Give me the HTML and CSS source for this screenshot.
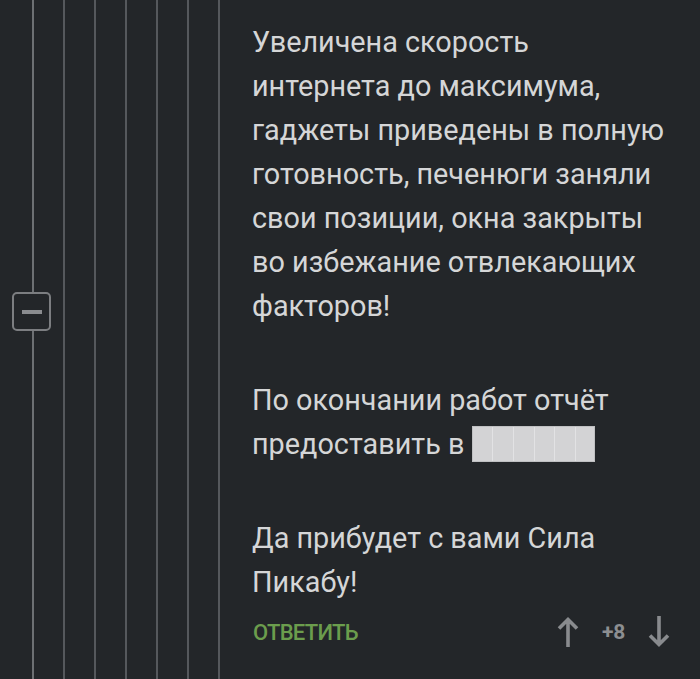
FILE: index.html
```html
<!DOCTYPE html>
<html lang="ru">
<head>
<meta charset="utf-8">
<title>Комментарий</title>
<link rel="stylesheet" href="styles.css">
</head>
<body>
<div class="comment">
  <div class="threads">
    <div class="branch branch-main">
      <button class="toggle" aria-label="Свернуть"><span class="toggle-bar"></span></button>
    </div>
    <div class="branch"></div>
    <div class="branch"></div>
    <div class="branch"></div>
    <div class="branch"></div>
    <div class="branch"></div>
    <div class="branch"></div>
  </div>
  <div class="content">
    <p class="para">Увеличена скорость<br>интернета до максимума,<br>гаджеты приведены в полную<br>готовность, печенюги заняли<br>свои позиции, окна закрыты<br>во избежание отвлекающих<br>факторов!</p>
    <p class="para">По окончании работ отчёт<br>предоставить в <span class="redacted" aria-label="скрыто"></span></p>
    <p class="para">Да прибудет с вами Сила<br>Пикабу!</p>
    <div class="actions">
      <a class="reply" href="#">ОТВЕТИТЬ</a>
      <div class="rating">
        <svg class="arrow" width="22" height="32" viewBox="0 0 22 32"><path d="M11 3.5V31M2 12.5L11 3.5L20 12.5" fill="none" stroke="currentColor" stroke-width="3.6" stroke-linejoin="miter" stroke-linecap="butt"/></svg>
        <span class="score">+8</span>
        <svg class="arrow" width="22" height="32" viewBox="0 0 22 32"><path d="M11 0V28.5M2 19.5L11 28.5L20 19.5" fill="none" stroke="currentColor" stroke-width="3.6" stroke-linejoin="miter" stroke-linecap="butt"/></svg>
      </div>
    </div>
  </div>
</div>
</body>
</html>
```

FILE: styles.css
```css
html, body {
  margin: 0;
  padding: 0;
  background: #232629;
}

body {
  width: 700px;
  height: 679px;
  overflow: hidden;
  font-family: Roboto, "Noto Sans", sans-serif;
}

.comment {
  display: flex;
  min-height: 679px;
}

.threads {
  display: flex;
  gap: 29px;
  padding-left: 32px;
  flex: none;
}

.branch {
  width: 2px;
  background: #55585c;
  position: relative;
}

.branch-main {
  background: #6d7073;
}

.toggle {
  position: absolute;
  left: -20px;
  top: 292px;
  width: 39px;
  height: 39px;
  box-sizing: border-box;
  border: 2px solid #7c7e81;
  border-radius: 5px;
  background: #232629;
  padding: 0;
  display: flex;
  align-items: center;
  justify-content: center;
  cursor: pointer;
}

.toggle-bar {
  display: block;
  width: 20px;
  height: 4px;
  background: #8a8c8f;
}

.content {
  flex: none;
  width: 418px;
  margin-left: 32px;
  padding-top: 20px;
  color: #d5d6d7;
}

.para {
  margin: 0 0 50px;
  font-size: 28.8px;
  line-height: 44px;
  white-space: nowrap;
}

.para:nth-of-type(3) {
  margin-bottom: 0;
}

.redacted {
  display: inline-block;
  width: 123px;
  height: 36px;
  box-sizing: border-box;
  vertical-align: -8px;
  background-color: #d3d3d5;
  background-image: repeating-linear-gradient(to right, transparent 0, transparent 19.5px, #e2e2e4 19.5px, #e2e2e4 20.5px);
  border: 1px solid #bfc0c2;
}

.actions {
  height: 56px;
  display: flex;
  align-items: center;
  justify-content: space-between;
}

.reply {
  color: #6b9d4d;
  font-size: 22px;
  font-weight: 500;
  letter-spacing: -0.7px;
  text-decoration: none;
  margin-left: 1px;
}

.rating {
  display: flex;
  align-items: center;
  gap: 23px;
  color: #898b8e;
}

.arrow {
  display: block;
}

.score {
  font-size: 21px;
  font-weight: 700;
  letter-spacing: -0.3px;
  color: #8c8e91;
}
```
